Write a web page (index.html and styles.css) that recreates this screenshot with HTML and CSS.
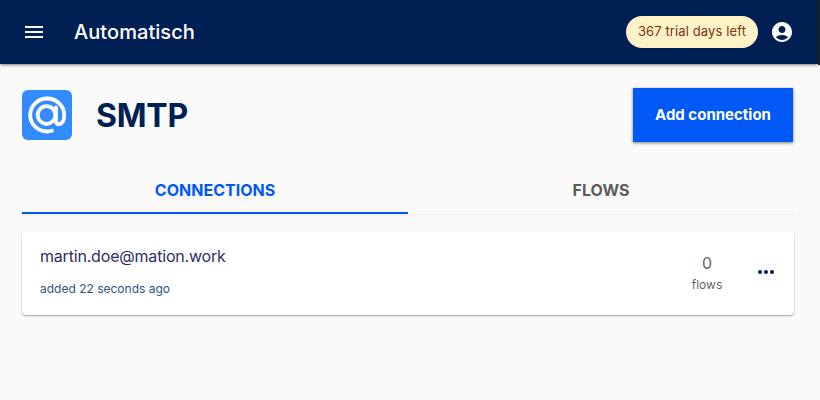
FILE: index.html
```html
<!DOCTYPE html>
<html lang="en">
<head>
    <meta charset="UTF-8">
    <meta name="viewport" content="width=device-width, initial-scale=1.0">
    <title>SMTP - Automatisch</title>
    <link rel="stylesheet" href="styles.css">
</head>
<body>
    <div class="topbar">
        <header class="header">
            <button class="icon-button menu-button" aria-label="Open menu">
                <svg width="24" height="24" viewBox="0 0 24 24"><path d="M3 18h18v-2H3v2zm0-5h18v-2H3v2zm0-7v2h18V6H3z"/></svg>
            </button>
            <h1 class="brand">Automatisch</h1>
            <span class="trial">367 trial days left</span>
            <button class="icon-button" aria-label="Account">
                <svg width="24" height="24" viewBox="0 0 24 24"><path d="M12 2C6.48 2 2 6.48 2 12s4.480 10 10 10 10-4.480 10-10S17.520 2 12 2zm0 4c1.930 0 3.500 1.570 3.500 3.500S13.930 13 12 13s-3.500-1.570-3.500-3.500S10.070 6 12 6zm0 14c-2.030 0-4.430-.82-6.140-2.880C7.550 15.800 9.680 15 12 15s4.450.8 6.140 2.120C16.430 19.180 14.030 20 12 20z"/></svg>
            </button>
        </header>
    </div>

    <main class="content">
        <div class="page-head">
            <svg class="app-icon" width="50" height="50" viewBox="0 0 50 50">
                <rect width="50" height="50" rx="6" fill="#338cff"/>
                <g fill="none" stroke="#fff" stroke-width="3.800" stroke-linecap="round">
                    <circle cx="24.500" cy="25" r="8.800"/>
                    <path d="M34 17.500V31c0 5.500 8.200 4.500 8.200-6A17 16.500 0 1 0 25.200 41.500Q28 41.500 30 40.800"/>
                </g>
            </svg>
            <h2 class="app-name">SMTP</h2>
            <button class="add-button">Add connection</button>
        </div>

        <nav class="tabs">
            <a class="tab active">Connections</a>
            <a class="tab">Flows</a>
        </nav>

        <div class="card">
            <div class="card-info">
                <p class="card-title">martin.doe@mation.work</p>
                <p class="card-date">added 22 seconds ago</p>
            </div>
            <div class="card-count">
                <span class="count">0</span>
                <span class="count-label">flows</span>
            </div>
            <svg class="more" width="24" height="24" viewBox="0 0 24 24"><circle cx="6" cy="12" r="2"/><circle cx="12" cy="12" r="2"/><circle cx="18" cy="12" r="2"/></svg>
        </div>
    </main>
</body>
</html>
```
FILE: styles.css
```css
* {
    box-sizing: border-box;
}
body {
    font-family: Inter, sans-serif;
    margin: 0;
    background-color: #fafafa;
}
h1, h2, p {
    margin: 0;
}
button {
    border: none;
    font-family: inherit;
    cursor: pointer;
}
.topbar {
    height: 65px;
    background: linear-gradient(to left, #222 2px, transparent 2px);
    padding-right: 2px;
}
.header {
    display: flex;
    align-items: center;
    height: 64px;
    padding: 0 24px 0 22px;
    background-color: #001f52;
    color: #fff;
    box-shadow: 0 1px 3px rgba(0, 0, 0, 0.5);
}
.icon-button {
    display: flex;
    padding: 0;
    background: none;
}
.icon-button svg {
    fill: #fff;
}
.menu-button {
    margin-right: 28px;
}
.brand {
    flex: 1;
    font-size: 20px;
    font-weight: 500;
    line-height: 32px;
    letter-spacing: 0.06px;
}
.trial {
    height: 32px;
    margin-right: 12px;
    padding: 0 12px;
    border-radius: 16px;
    background-color: #fef3c7;
    color: #78350f;
    font-size: 13px;
    line-height: 31px;
    letter-spacing: 0.11px;
}
.content {
    padding: 23px 26px 24px 22px;
}
.page-head {
    display: flex;
    align-items: center;
    height: 54px;
}
.app-name {
    flex: 1;
    margin-left: 24px;
    color: #001f52;
    font-size: 32px;
    font-weight: 700;
    letter-spacing: -0.2px;
}
.add-button {
    width: 160px;
    height: 54px;
    margin-right: 1px;
    padding: 0 0 2px;
    background-color: #0059f7;
    color: #fff;
    font-size: 15px;
    font-weight: 700;
    box-shadow: 0 1px 3px rgba(0, 0, 0, 0.5);
}
.tabs {
    display: flex;
    height: 49px;
    margin-top: 24px;
    border-bottom: 1px solid #ececec;
}
.tab {
    flex: 1;
    height: 48px;
    color: #5c5c5c;
    font-size: 16px;
    font-weight: 700;
    line-height: 48px;
    text-align: center;
    text-transform: uppercase;
}
.tab.active {
    color: #0059f7;
    border-bottom: 2px solid #0059f7;
}
.card {
    display: flex;
    align-items: center;
    height: 84px;
    margin-top: 16px;
    padding: 0 16px 0 18px;
    border-radius: 4px;
    background-color: #fff;
    box-shadow: 0 1px 0 #b5b5b5, 0 1px 3px rgba(0, 0, 0, 0.2);
}
.card-info {
    flex: 1;
    padding-bottom: 4px;
}
.card-title {
    color: #2e2e66;
    font-size: 16px;
    line-height: 24px;
    letter-spacing: -0.19px;
}
.card-date {
    margin: 11px 0 0;
    color: #31527f;
    font-size: 12px;
    line-height: 20px;
}
.card-count {
    display: flex;
    flex-direction: column;
    align-items: center;
    width: 60px;
    margin-right: 17px;
    color: #666;
}
.count {
    font-size: 16px;
    line-height: 24px;
}
.count-label {
    font-size: 12px;
    line-height: 20px;
}
.more {
    margin-bottom: 2px;
    fill: #001f52;
}
```
